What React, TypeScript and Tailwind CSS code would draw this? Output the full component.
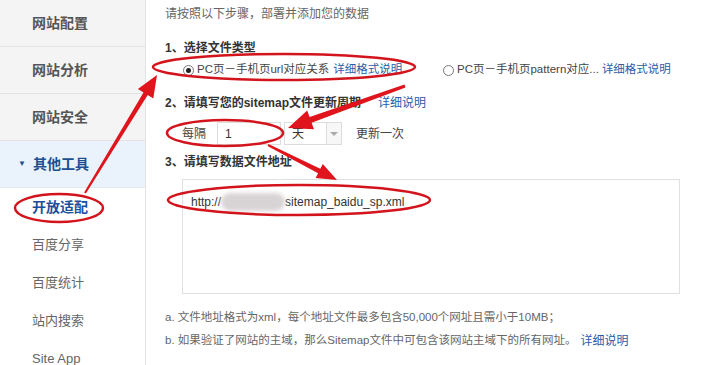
const font = { fontFamily: '"Liberation Sans", "Noto Sans CJK SC", sans-serif' };

function Sidebar() {
  const top = ["网站配置", "网站分析", "网站安全"];
  const subs = ["百度分享", "百度统计", "站内搜索", "Site App"];
  return (
    <div className="w-[146px] shrink-0 border-r border-[#e3e3e3] h-full">
      {top.map((t) => (
        <div
          key={t}
          className="h-[47px] flex items-center pl-[32px] bg-[#f4f4f4] border-b border-[#e4e4e4] text-[14px] font-bold text-[#555]"
        >
          {t}
        </div>
      ))}
      <div className="h-[47px] flex items-center pl-[18px] bg-[#eaf3fb] border-b border-[#e4e9ee] text-[14px] font-bold text-[#1e4f8f]">
        <span className="text-[8px] mr-[7px] text-[#1e4f8f]">▼</span>
        其他工具
      </div>
      <div className="h-[38px] flex items-center pl-[32px] text-[14px] font-bold text-[#1a4f9c]">开放适配</div>
      {subs.map((t) => (
        <div key={t} className="h-[38px] flex items-center pl-[32px] text-[13px] text-[#666]">
          {t}
        </div>
      ))}
    </div>
  );
}

function Radio({ checked }: { checked?: boolean }) {
  return (
    <span className="w-[11px] h-[11px] rounded-full border border-[#777] bg-white flex items-center justify-center mr-[3px]">
      {checked && <span className="w-[5px] h-[5px] rounded-full bg-[#222]" />}
    </span>
  );
}

function Annotations() {
  return (
    <svg className="absolute left-0 top-0 pointer-events-none" width="719" height="365" viewBox="0 0 719 365">
      <g fill="none" stroke="#d3141c" strokeWidth="2.5">
        <ellipse cx="284" cy="67" rx="131" ry="13" />
        <ellipse cx="225" cy="133" rx="58" ry="13" />
        <ellipse cx="299" cy="200" rx="131" ry="15" />
        <ellipse cx="59" cy="208" rx="44" ry="14" />
      </g>
      <g fill="#e0141c">
        <polygon points="157,75 153.3,98.5 147.7,95.1 85.9,193.5 84.1,192.5 143.5,92.5 137.9,89.1" />
        <polygon points="288,128 314,129.3 311.6,122.7 405.5,87.4 404.5,84.6 309.6,117.1 307.2,110.5" />
        <polygon points="337,180 315.6,178.1 318.1,173.2 267.5,145.9 268.5,144.1 320.3,168.8 322.8,163.9" />
      </g>
    </svg>
  );
}

export default function App() {
  return (
    <div className="relative w-[719px] h-[365px] overflow-hidden bg-white flex" style={font}>
      <Sidebar />
      <div className="flex-1 pl-[19px] text-[12px] text-[#555]">
        <div className="h-[28px] flex items-center text-[#666]">请按照以下步骤，部署并添加您的数据</div>
        <div className="mt-[10px] h-[20px] flex items-center font-bold text-[#333]">1、选择文件类型</div>
        <div className="mt-[2px] h-[20px] flex items-center text-[11.5px]">
          <div className="flex items-center ml-[18px] w-[260px]">
            <Radio checked />
            <span className="text-[#444]">PC页－手机页url对应关系</span>
            <span className="ml-[4px] text-[#2a5ca8]">详细格式说明</span>
          </div>
          <div className="flex items-center">
            <Radio />
            <span className="text-[#444]">PC页－手机页pattern对应...</span>
            <span className="ml-[3px] text-[#2a5ca8]">详细格式说明</span>
          </div>
        </div>
        <div className="mt-[13px] h-[20px] flex items-center">
          <span className="font-bold text-[#333]">2、请填写您的sitemap文件更新周期</span>
          <span className="ml-[17px] text-[#2a5ca8]">详细说明</span>
        </div>
        <div className="mt-[9px] h-[23px] flex items-center ml-[17px]">
          <span className="text-[#444]">每隔</span>
          <div className="ml-[11px] w-[64px] h-[23px] border border-[#dcdcdc] flex items-center pl-[7px] text-[#333]">1</div>
          <div className="ml-[3px] w-[58px] h-[23px] border border-[#dcdcdc] flex items-center">
            <span className="flex-1 pl-[7px] text-[#333]">天</span>
            <span className="w-[15px] h-full border-l border-[#dcdcdc] bg-[#f7f7f7] flex items-center justify-center">
              <span className="w-0 h-0 border-l-[4px] border-r-[4px] border-t-[4px] border-l-transparent border-r-transparent border-t-[#aaa]" />
            </span>
          </div>
          <span className="ml-[14px] text-[#444]">更新一次</span>
        </div>
        <div className="mt-[7px] h-[20px] flex items-center font-bold text-[#333]">3、请填写数据文件地址</div>
        <div className="mt-[7px] ml-[17px] w-[498px] h-[115px] border border-[#e0e0e0] pl-[8px] pt-[13px]">
          <div className="flex items-center text-[12px] text-[#333]">
            <span>http://</span>
            <span className="inline-block w-[64px] h-[18px] rounded-full bg-[#d8d3d5] blur-[2px]" />
            <span>sitemap_baidu_sp.xml</span>
          </div>
        </div>
        <div className="mt-[14px] h-[20px] flex items-center text-[11.5px] text-[#666]">
          a. 文件地址格式为xml，每个地址文件最多包含50,000个网址且需小于10MB；
        </div>
        <div className="mt-[3px] h-[20px] flex items-center text-[11.5px] text-[#666]">
          b. 如果验证了网站的主域，那么Sitemap文件中可包含该网站主域下的所有网址。
          <span className="ml-[4px] text-[12px] text-[#2a5ca8]">详细说明</span>
        </div>
      </div>
      <Annotations />
    </div>
  );
}
